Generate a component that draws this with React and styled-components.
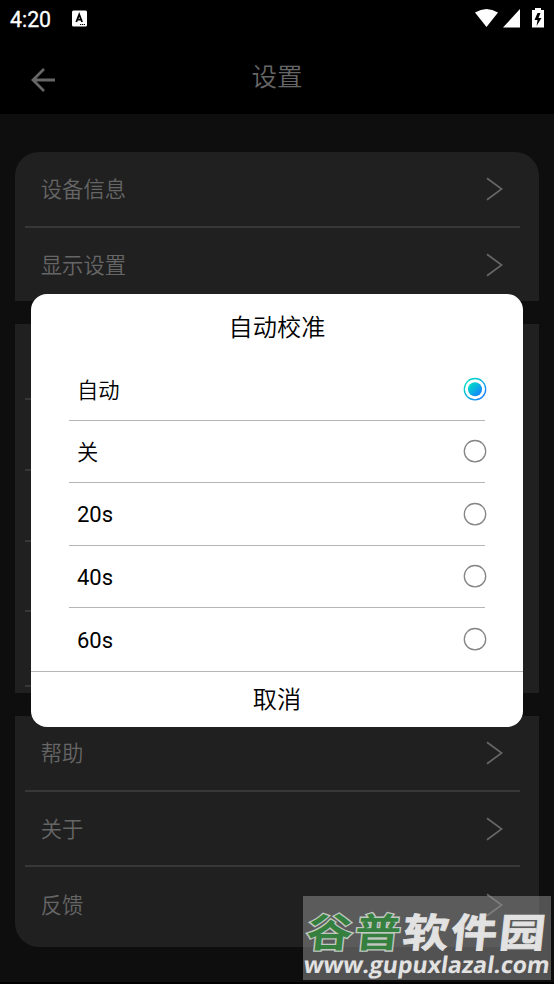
import React from 'react';
import styled, { createGlobalStyle } from 'styled-components';

const GlobalStyle = createGlobalStyle`
  * {
    box-sizing: border-box;
  }

  body {
    margin: 0;
    background: #0e0e0e;
    font-family: Roboto, 'Noto Sans CJK SC', sans-serif;
  }
`;

const Screen = styled.div`
  position: relative;
  width: 554px;
  height: 984px;
  overflow: hidden;
  background: #0e0e0e;
  border-bottom: 2px solid #000;
`;

const StatusBar = styled.div`
  display: flex;
  align-items: center;
  height: 38px;
  padding: 0 10px 2px;
  background: #000;
  color: #fff;
`;

const Clock = styled.span`
  width: 62px;
  padding-top: 3px;
  font-size: 21.3px;
  line-height: 24px;
  -webkit-text-stroke: 0.3px #fff;
`;

const StatusIcons = styled.div`
  display: flex;
  margin-left: auto;
`;

const TopBar = styled.header`
  display: grid;
  grid-template-columns: 58px 1fr 58px;
  align-items: center;
  height: 76px;
  background: #000;
`;

const BackButton = styled.button`
  display: flex;
  padding: 8px 0 0 31px;
  border: 0;
  background: none;
`;

const PageTitle = styled.h1`
  margin: 0;
  padding-top: 2px;
  color: #666;
  font-size: 25.5px;
  line-height: 38px;
  font-weight: 350;
  text-align: center;
`;

const Content = styled.main`
  display: flex;
  flex-direction: column;
  gap: 23px;
  padding: 38px 15.3px 0;
`;

const Card = styled.section`
  padding: 0 18.5px 0 9.5px;
  background: #202020;
  border-radius: ${({ $radius }) => $radius || '0'};

  &:last-child {
    padding-bottom: 5px;
  }
`;

const Row = styled.div`
  display: flex;
  align-items: center;
  justify-content: space-between;
  height: ${({ $height }) => $height}px;
  padding: 0 17px 0 16px;
  border-bottom: ${({ $last }) => ($last ? '0' : '2px solid #373737')};
`;

const RowLabel = styled.span`
  padding-top: 2px;
  color: #666;
  font-size: 21.3px;
  line-height: 32px;
  font-weight: 350;
`;

const Overlay = styled.div`
  position: absolute;
  inset: 0;
  padding: 294px 31px 0;
`;

const Dialog = styled.div`
  height: 433px;
  background: #fff;
  border-radius: 16px;
  color: #000;
`;

const DialogTitle = styled.h2`
  margin: 0;
  height: 64px;
  font-size: 24.2px;
  line-height: 68px;
  font-weight: 350;
  text-align: center;
`;

const Options = styled.div`
  padding: 0 38px;
`;

const Option = styled.label`
  display: flex;
  align-items: center;
  justify-content: space-between;
  height: 62.5px;
  padding-left: 8px;
  border-bottom: ${({ $last }) => ($last ? '0' : '1px solid #b5b5b5')};
  font-size: ${({ $latin }) => ($latin ? '22px' : '21.3px')};
  line-height: 32px;
  font-weight: ${({ $latin }) => ($latin ? 400 : 350)};

  span {
    padding-top: ${({ $latin }) => ($latin ? '3px' : '4px')};
  }

  svg {
    margin-right: -2px;
  }
`;

const CancelButton = styled.button`
  display: block;
  width: 100%;
  height: 57px;
  padding: 0;
  border: 0;
  border-top: 1px solid #b5b5b5;
  background: none;
  color: #000;
  font-family: inherit;
  font-size: 24.2px;
  line-height: 56px;
  font-weight: 350;
`;

const Watermark = styled.div`
  position: absolute;
  left: 303px;
  top: 896px;
  width: 248px;
  height: 84px;
  background: rgba(150, 150, 150, 0.5);
`;

const SiteName = styled.div`
  width: 242px;
  height: 66px;
  margin: 1px 0 0 4px;
  color: #e2e2e2;
  font-family: 'Noto Sans CJK SC', sans-serif;
  font-size: 46px;
  line-height: 66px;
  font-weight: 700;
  letter-spacing: 2.2px;
  white-space: nowrap;
  transform: skewX(-6deg) scaleY(0.86);
  -webkit-text-stroke: 1px #e2e2e2;

  span {
    color: #35803f;
    -webkit-text-stroke: 3px #c0c8c0;
    paint-order: stroke fill;
  }
`;

const SiteUrl = styled.div`
  margin: -10px 0 0 1px;
  color: #e2e2e2;
  font-family: 'Open Sans', sans-serif;
  font-size: 23.1px;
  line-height: 23px;
  font-weight: 700;
  white-space: nowrap;
  transform: skewX(-8deg);
`;

const InputBadge = () => (
  <svg width="15" height="17" viewBox="0 0 15 17">
    <rect width="15" height="16" y="0.5" rx="1.5" fill="#fff" />
    <path d="M4.3 12 7.2 4.5 10.1 12M5.2 9.7h4" fill="none" stroke="#000" strokeWidth="1.8" />
    <path d="M8 14.5h5" stroke="#000" strokeWidth="1.2" strokeDasharray="1.2 .7" />
  </svg>
);

const SystemIcons = () => (
  <svg width="69" height="22" viewBox="0 0 69 22" fill="#fff">
    <path d="M0 5.5Q11.5-1.5 23 5.5L11.5 20Z" />
    <path d="M45 2v18.5H28Z" />
    <path d="M57 3h3V1h6v2h3v17.5H57Z" />
    <path d="m62.5 6-3 7h3l-1 6 5-8h-3l2-5Z" fill="#000" />
  </svg>
);

const BackIcon = () => (
  <svg width="26" height="26" viewBox="0 0 26 26" fill="none" stroke="#666" strokeWidth="2.8">
    <path d="M24 13H2M13 2 2 13l11 11" />
  </svg>
);

const Chevron = () => (
  <svg width="17" height="24" viewBox="0 0 17 24" fill="none" stroke="#666" strokeWidth="1.7">
    <path d="M1 1.2 15.7 12 1 22.8" />
  </svg>
);

const Radio = ({ checked }) => (
  <svg width="24" height="24" viewBox="0 0 24 24" fill="none">
    <defs>
      <linearGradient id="radio" x1="0" y1="0" x2="1" y2="1">
        <stop offset="0.1" stopColor="#00dfc5" />
        <stop offset="0.9" stopColor="#1680ff" />
      </linearGradient>
    </defs>
    <circle cx="12" cy="12.2" r="10.7" stroke={checked ? 'url(#radio)' : '#858585'} strokeWidth="1.3" />
    {checked && <circle cx="12" cy="12.2" r="7" fill="url(#radio)" />}
  </svg>
);

const cards = [
  {
    radius: '24px 24px 0 0',
    rows: [['设备信息', 76], ['显示设置', 73]],
  },
  {
    rows: [['', 76], ['', 71], ['', 70.5], ['', 70.5], ['', 75], ['', 6]],
  },
  {
    radius: '0 0 24px 24px',
    rows: [['帮助', 76], ['关于', 75], ['反馈', 75]],
  },
];

const options = ['自动', '关', '20s', '40s', '60s'];

const SettingsCard = ({ radius, rows }) => (
  <Card $radius={radius}>
    {rows.map(([label, height], i) => (
      <Row key={i} $height={height} $last={i === rows.length - 1}>
        {label && <RowLabel>{label}</RowLabel>}
        {label && <Chevron />}
      </Row>
    ))}
  </Card>
);

const App = () => {
  return (
    <>
      <GlobalStyle />
      <Screen>
        <StatusBar>
          <Clock>4:20</Clock>
          <InputBadge />
          <StatusIcons>
            <SystemIcons />
          </StatusIcons>
        </StatusBar>
        <TopBar>
          <BackButton aria-label="返回">
            <BackIcon />
          </BackButton>
          <PageTitle>设置</PageTitle>
        </TopBar>
        <Content>
          {cards.map((card, i) => (
            <SettingsCard key={i} {...card} />
          ))}
        </Content>
        <Overlay>
          <Dialog role="dialog">
            <DialogTitle>自动校准</DialogTitle>
            <Options>
              {options.map((option, i) => (
                <Option key={option} $latin={i > 1} $last={i === options.length - 1}>
                  <span>{option}</span>
                  <Radio checked={i === 0} />
                </Option>
              ))}
            </Options>
            <CancelButton>取消</CancelButton>
          </Dialog>
        </Overlay>
        <Watermark>
          <SiteName>
            <span>谷普</span>软件园
          </SiteName>
          <SiteUrl>www.gupuxlazal.com</SiteUrl>
        </Watermark>
      </Screen>
    </>
  );
};

export default App;
